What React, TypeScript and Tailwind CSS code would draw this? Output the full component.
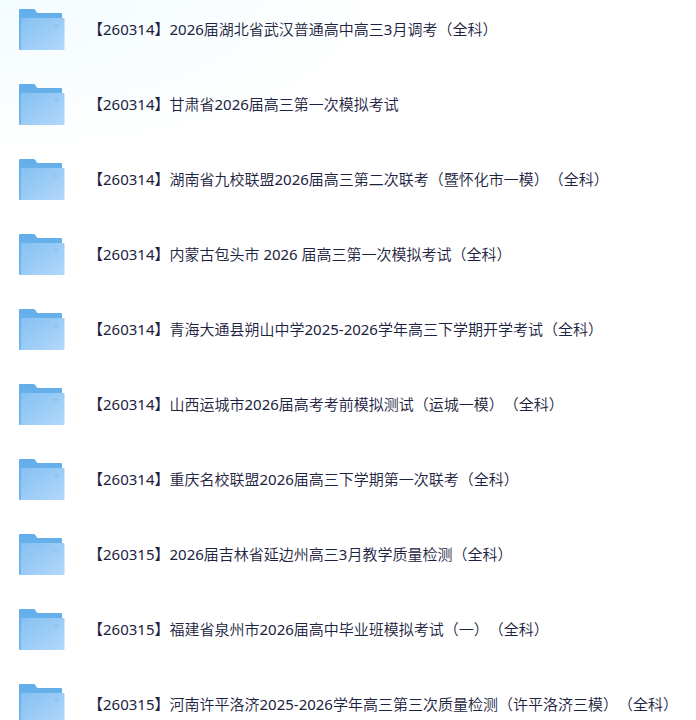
const folders = [
  '【260314】2026届湖北省武汉普通高中高三3月调考（全科）',
  '【260314】甘肃省2026届高三第一次模拟考试',
  '【260314】湖南省九校联盟2026届高三第二次联考（暨怀化市一模）（全科）',
  '【260314】内蒙古包头市 2026 届高三第一次模拟考试（全科）',
  '【260314】青海大通县朔山中学2025-2026学年高三下学期开学考试（全科）',
  '【260314】山西运城市2026届高考考前模拟测试（运城一模）（全科）',
  '【260314】重庆名校联盟2026届高三下学期第一次联考（全科）',
  '【260315】2026届吉林省延边州高三3月教学质量检测（全科）',
  '【260315】福建省泉州市2026届高中毕业班模拟考试（一）（全科）',
  '【260315】河南许平洛济2025-2026学年高三第三次质量检测（许平洛济三模）（全科）',
];

const FolderIcon = () => (
  <svg width="46" height="42" viewBox="0 0 46 42" className="shrink-0" aria-hidden="true">
    <defs>
      <linearGradient id="back" x1="0" y1="0" x2="0" y2="1">
        <stop offset="0" stopColor="#62aeea" />
        <stop offset="1" stopColor="#74b6ee" />
      </linearGradient>
      <linearGradient id="front" x1="0" y1="0" x2="1" y2="1">
        <stop offset="0" stopColor="#86c1f2" />
        <stop offset="0.5" stopColor="#9accf6" />
        <stop offset="1" stopColor="#b4d8fb" />
      </linearGradient>
    </defs>
    <path d="M0 1Q0 0 1 0H14.500Q16 0 16.700 1.500L17.500 3Q18 4 19 4H42Q43 4 43 5V41H1Q0 41 0 40Z" fill="url(#back)" />
    <path d="M3 9H44.500Q45.500 9 45.500 10V40Q45.500 41 44.500 41H2V10Q2 9 3 9Z" fill="url(#front)" />
    <path d="M34 15.500H40M35 18H39" stroke="#83b9ea" strokeWidth="1" opacity="0.6" />
  </svg>
);

export default function App() {
  return (
    <main className="h-screen overflow-hidden bg-white bg-[radial-gradient(ellipse_400px_160px_at_0_0,#f3fcff,#ffffff)]">
      <ul>
        {folders.map((name) => (
          <li key={name} className="flex h-[75px] items-start gap-[23px] pl-[19px] pt-[9px]">
            <FolderIcon />
            <span className="whitespace-nowrap font-['Noto_Sans','Noto_Sans_CJK_SC_DemiLight','Noto_Sans_CJK_SC_Light','Noto_Sans_CJK_SC',sans-serif] text-[15px] leading-10 text-[#1c2340] [text-spacing-trim:space-all]">
              {name}
            </span>
          </li>
        ))}
      </ul>
    </main>
  );
}
